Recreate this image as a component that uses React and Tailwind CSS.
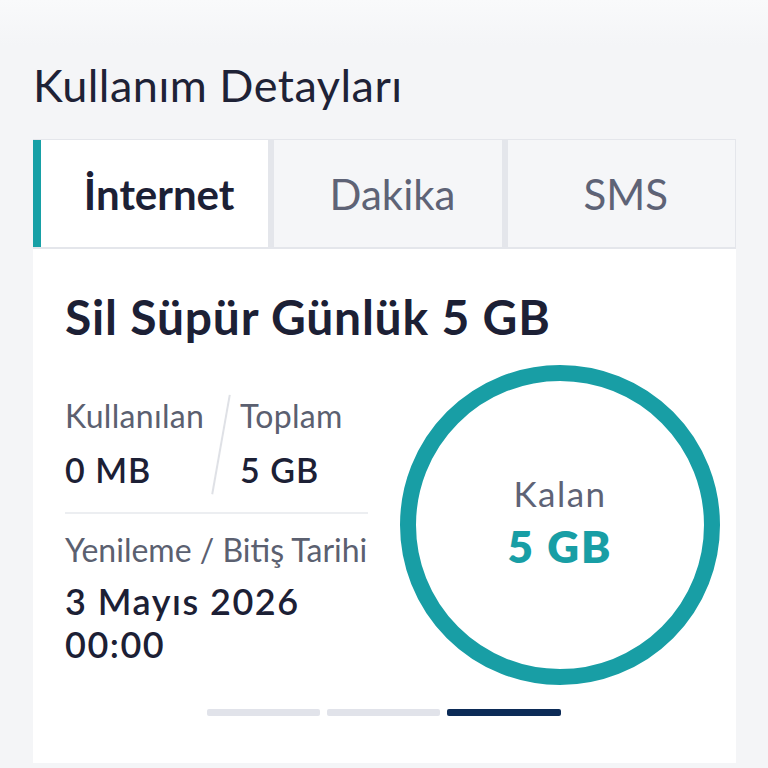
import React from "react";

export default function App() {
  const font = { fontFamily: "Lato, 'Open Sans', sans-serif" };
  return (
    <div className="w-[768px] h-[768px] bg-[#f4f5f7] overflow-hidden" style={font}>
      <div className="h-[46px] bg-gradient-to-b from-[#f9fafb] to-[#f4f5f7]" />
      <div className="pl-[33px] pr-[32px]">
        <h1 className="text-[45px] leading-[54px] text-[#1e2236] mt-[12px] tracking-[0.5px]">Kullanım Detayları</h1>
        <div className="mt-[27px] flex bg-[#e4e6eb] pt-[1px] pb-[2px] pr-[1px]">
          <div className="w-[8px] bg-[#17a0a6]" />
          <div className="flex-1 h-[107px] bg-white flex items-center justify-center pl-[9px]">
            <span className="text-[42px] font-bold text-[#1c2035] leading-none">İnternet</span>
          </div>
          <div className="flex-1 h-[107px] bg-[#f5f6f8] ml-[6px] flex items-center justify-center pl-[9px]">
            <span className="text-[42px] text-[#5e6376] leading-none">Dakika</span>
          </div>
          <div className="flex-1 h-[107px] bg-[#f5f6f8] ml-[6px] flex items-center justify-center pl-[9px]">
            <span className="text-[42px] text-[#5e6376] leading-none">SMS</span>
          </div>
        </div>
        <div className="bg-white h-[514px] pl-[32px] pr-[16px] pt-[39px]">
          <div className="text-[48px] font-bold text-[#1c2035] leading-[58px] tracking-[0.8px]">Sil Süpür Günlük 5 GB</div>
          <div className="flex items-start">
            <div className="w-[303px] mt-[51px]">
              <div className="flex relative">
                <div className="w-[175px]">
                  <div className="text-[32px] text-[#5b6070] leading-[38px] tracking-[0.3px]">Kullanılan</div>
                  <div className="text-[34px] font-semibold text-[#1c2035] leading-[41px] mt-[14px] tracking-[1px]">0 MB</div>
                </div>
                <div className="absolute left-[155px] top-[-3px] w-[1.5px] h-[101px] bg-[#dfe1e6] rotate-[10deg]" />
                <div>
                  <div className="text-[32px] text-[#5b6070] leading-[38px] tracking-[0.3px]">Toplam</div>
                  <div className="text-[34px] font-semibold text-[#1c2035] leading-[41px] mt-[14px] tracking-[1px]">5 GB</div>
                </div>
              </div>
              <div className="h-[2px] bg-[#eceef1] mt-[22px]" />
              <div className="text-[32px] text-[#5b6070] leading-[38px] mt-[17px] whitespace-nowrap">Yenileme / Bitiş Tarihi</div>
              <div className="text-[36px] font-semibold text-[#1c2035] leading-[43px] mt-[11px] tracking-[1.5px]">3 Mayıs 2026<br />00:00</div>
            </div>
            <div className="ml-[32px] mt-[19px] w-[320px] h-[320px] shrink-0 rounded-full border-[16px] border-[#189ea5] flex flex-col items-center">
              <div className="text-[35px] text-[#5e6376] leading-[42px] mt-[91px] tracking-[1.5px]">Kalan</div>
              <div className="text-[44px] font-extrabold text-[#189ea5] leading-[53px] mt-[6px] tracking-[2px]">5 GB</div>
            </div>
          </div>
          <div className="flex gap-[7px] mt-[24px] ml-[142px]">
            <div className="w-[113px] h-[7px] rounded-[2px] bg-[#e1e3ea]" />
            <div className="w-[113px] h-[7px] rounded-[2px] bg-[#e1e3ea]" />
            <div className="w-[114px] h-[7px] rounded-[2px] bg-[#0c2b57]" />
          </div>
        </div>
      </div>
    </div>
  );
}
